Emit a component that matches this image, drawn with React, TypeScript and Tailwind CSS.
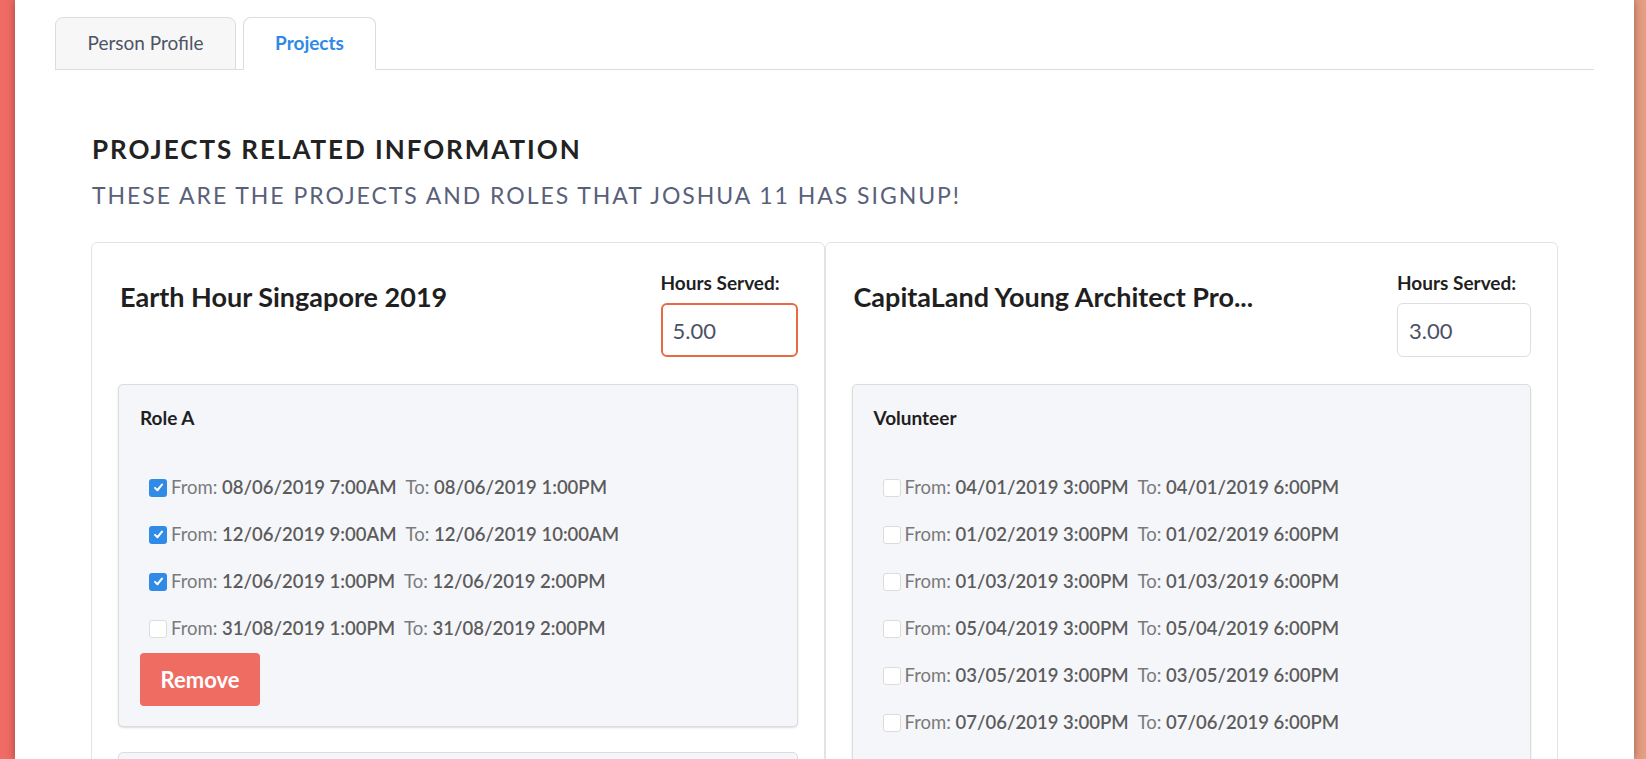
import React from "react";

type Slot = { from: string; to: string; checked: boolean };

const card1: Slot[] = [
  { from: "08/06/2019 7:00AM", to: "08/06/2019 1:00PM", checked: true },
  { from: "12/06/2019 9:00AM", to: "12/06/2019 10:00AM", checked: true },
  { from: "12/06/2019 1:00PM", to: "12/06/2019 2:00PM", checked: true },
  { from: "31/08/2019 1:00PM", to: "31/08/2019 2:00PM", checked: false },
];

const card2: Slot[] = [
  { from: "04/01/2019 3:00PM", to: "04/01/2019 6:00PM", checked: false },
  { from: "01/02/2019 3:00PM", to: "01/02/2019 6:00PM", checked: false },
  { from: "01/03/2019 3:00PM", to: "01/03/2019 6:00PM", checked: false },
  { from: "05/04/2019 3:00PM", to: "05/04/2019 6:00PM", checked: false },
  { from: "03/05/2019 3:00PM", to: "03/05/2019 6:00PM", checked: false },
  { from: "07/06/2019 3:00PM", to: "07/06/2019 6:00PM", checked: false },
];

function Box({ checked }: { checked: boolean }) {
  if (checked) {
    return (
      <span className="flex h-[18px] w-[18px] shrink-0 items-center justify-center rounded-[3px] bg-[#2f8be6]">
        <svg width="11" height="11" viewBox="0 0 12 12">
          <path d="M2.2 6.4 L4.8 9 L9.8 2.8" fill="none" stroke="#fff" strokeWidth="2.2" strokeLinecap="round" strokeLinejoin="round" />
        </svg>
      </span>
    );
  }
  return <span className="block h-[18px] w-[18px] shrink-0 rounded-[3px] border border-[#dcdcdc] bg-white" />;
}

function Row({ s }: { s: Slot }) {
  return (
    <div className="flex h-[47px] items-center pl-[9px] text-[18.5px] text-[#7a7a7a]">
      <Box checked={s.checked} />
      <span className="ml-[4px] whitespace-nowrap">
        From: <span className="font-semibold text-[#5c5c5c]">{s.from}</span>
        <span className="ml-[9px]">To: </span>
        <span className="font-semibold text-[#5c5c5c]">{s.to}</span>
      </span>
    </div>
  );
}

function Card({
  title,
  hours,
  focused,
  role,
  slots,
  remove,
}: {
  title: string;
  hours: string;
  focused: boolean;
  role: string;
  slots: Slot[];
  remove: boolean;
}) {
  return (
    <div className="flex-1 min-w-0 rounded-[6px] border border-[#e3e3e3] bg-white px-[26px] pt-[29px]">
      <div className="flex items-start justify-between pl-[2px]">
        <div className="pt-[9px] text-[27px] leading-[32px] font-bold text-[#1f1f1f] whitespace-nowrap">
          {title}
        </div>
        <div className="flex flex-col">
          <div className="text-[19px] leading-[22px] font-bold text-[#1f1f1f]">Hours Served:</div>
          <div
            className={
              focused
                ? "mt-[9px] flex h-[54px] w-[137px] items-center rounded-[6px] border-2 border-[#e86a45] px-[10px] text-[22px] text-[#4b5265]"
                : "mt-[9px] flex h-[54px] w-[134px] items-center rounded-[6px] border border-[#dedede] px-[11px] text-[22px] text-[#4b5265]"
            }
          >
            {hours}
          </div>
        </div>
      </div>
      <div className="mt-[27px] rounded-[5px] border border-[#dcdcdd] bg-[#f5f6fa] px-[21px] pt-[22px] pb-[20px] shadow-[0_1px_2px_0_rgba(34,36,38,0.15)]">
        <div className="text-[19px] leading-[22px] font-bold text-[#1f1f1f]">{role}</div>
        <div className="mt-[35px]">
          {slots.map((s, i) => (
            <Row key={i} s={s} />
          ))}
        </div>
        {remove ? (
          <button className="mt-[1px] h-[53px] w-[120px] rounded-[4px] bg-[#ef6c63] text-[22px] font-bold text-white">
            Remove
          </button>
        ) : (
          <div className="h-[60px]" />
        )}
      </div>
      {remove && (
        <div className="mt-[25px] h-[60px] rounded-[5px] border border-[#dcdcdd] bg-[#f5f6fa]" />
      )}
    </div>
  );
}

export default function App() {
  return (
    <div
      className="flex h-[759px] overflow-hidden bg-gradient-to-r from-[#ef6c64] to-[#e59d83] pl-[15px] pr-[12px]"
      style={{ fontFamily: "Lato, 'Noto Sans', sans-serif" }}
    >
      <div className="flex-1 overflow-hidden bg-white px-[40px] pt-[17px] shadow-[0_0_8px_rgba(60,20,10,0.45)]">
        <div className="flex items-end gap-[7px] border-b border-[#dcdcdc]">
          <div className="-mb-px flex h-[53px] w-[181px] items-center justify-center rounded-t-[8px] border border-[#dcdcdc] bg-[#f7f7f7] text-[19px] text-[#4d5466]">
            Person Profile
          </div>
          <div className="-mb-px flex h-[53px] w-[133px] items-center justify-center rounded-t-[8px] border border-b-white border-[#dcdcdc] bg-white text-[19px] font-bold text-[#2e8ae6]">
            Projects
          </div>
        </div>
        <div className="px-[36px] pt-[64px]">
          <h2 className="pl-[1px] text-[26px] leading-[30px] font-bold tracking-[0.075em] text-[#222222]">
            PROJECTS RELATED INFORMATION
          </h2>
          <div className="mt-[17px] pl-[1px] text-[23px] leading-[28px] tracking-[0.085em] text-[#596079]">
            THESE ARE THE PROJECTS AND ROLES THAT JOSHUA 11 HAS SIGNUP!
          </div>
          <div className="mt-[33px] flex">
            <Card
              title="Earth Hour Singapore 2019"
              hours="5.00"
              focused={true}
              role="Role A"
              slots={card1}
              remove={true}
            />
            <Card
              title="CapitaLand Young Architect Pro..."
              hours="3.00"
              focused={false}
              role="Volunteer"
              slots={card2}
              remove={false}
            />
          </div>
        </div>
      </div>
    </div>
  );
}
